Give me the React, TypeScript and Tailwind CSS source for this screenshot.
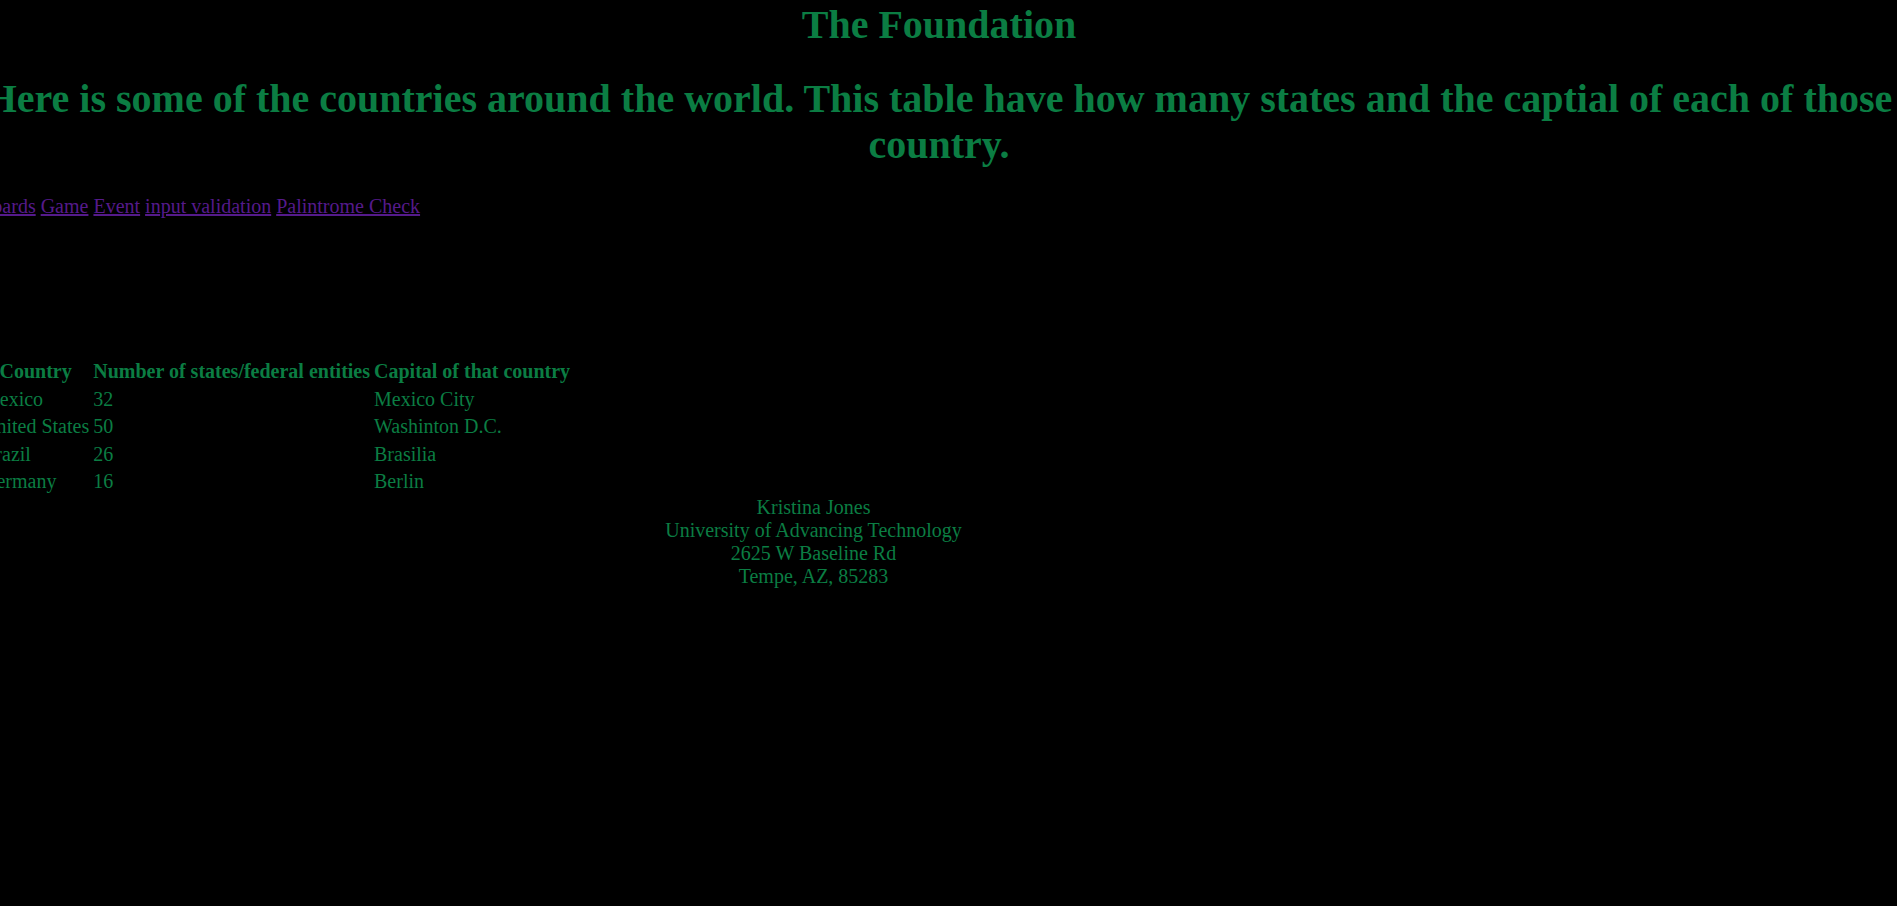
const links = ['Boards', 'Game', 'Event', 'input validation', 'Palintrome Check'];

const countries = [
  { name: 'Mexico', states: '32', capital: 'Mexico City' },
  { name: 'United States', states: '50', capital: 'Washinton D.C.' },
  { name: 'Brazil', states: '26', capital: 'Brasilia' },
  { name: 'Germany', states: '16', capital: 'Berlin' },
];

const address = [
  'Kristina Jones',
  'University of Advancing Technology',
  '2625 W Baseline Rd',
  'Tempe, AZ, 85283',
];

export default function App() {
  return (
    <div className="w-full min-h-screen h-[906px] overflow-hidden bg-black font-['Liberation_Serif','Times_New_Roman',serif] text-[20px] leading-[23px] text-[#0b7d43]">
      <div className="ml-[-21px] w-[1920px]">
        {/* Headings */}
        <h1 className="pt-[2px] text-center text-[40px] leading-[46px] font-bold">The Foundation</h1>
        <h1 className="mt-[28px] text-center text-[40px] leading-[46px] font-bold">
          Here is some of the countries around the world. This table have how many states and the captial of each of those country.
        </h1>

        {/* Nav links */}
        <div className="mt-[27px] flex gap-[5px]">
          {links.map((link) => (
            <a key={link} href="#" className="text-[#551a8b] underline">
              {link}
            </a>
          ))}
        </div>

        {/* Country table */}
        <table className="mt-[139px] border-separate border-spacing-[2px]">
          <thead>
            <tr>
              <th className="px-[1px] py-[1.25px] text-center font-bold">Country</th>
              <th className="px-[1px] py-[1.25px] text-center font-bold">Number of states/federal entities</th>
              <th className="px-[1px] py-[1.25px] text-center font-bold">Capital of that country</th>
            </tr>
          </thead>
          <tbody>
            {countries.map((c) => (
              <tr key={c.name}>
                <td className="px-[1px] py-[1.25px] text-left">{c.name}</td>
                <td className="px-[1px] py-[1.25px] text-left">{c.states}</td>
                <td className="px-[1px] py-[1.25px] text-left">{c.capital}</td>
              </tr>
            ))}
          </tbody>
        </table>

        {/* Footer address */}
        <div className="mt-[-1px] w-[1669px] text-center">
          {address.map((line) => (
            <div key={line}>{line}</div>
          ))}
        </div>
      </div>
    </div>
  );
}
